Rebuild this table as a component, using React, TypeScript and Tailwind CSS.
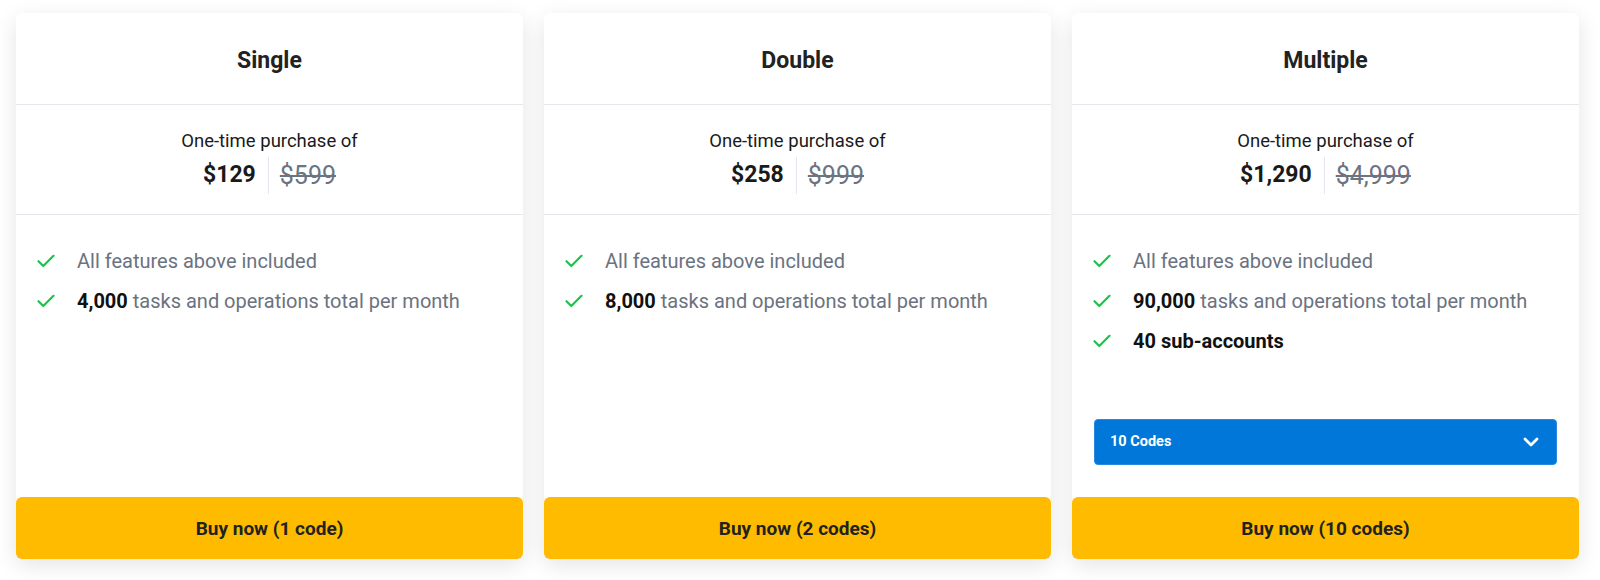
import { ChevronDown } from 'lucide-react'

type Feature = { bold?: string; text?: string; strong?: string }

type Plan = {
  name: string
  price: string
  oldPrice: string
  features: Feature[]
  cta: string
  select?: string
}

const plans: Plan[] = [
  {
    name: 'Single',
    price: '$129',
    oldPrice: '$599',
    features: [
      { text: 'All features above included' },
      { bold: '4,000', text: ' tasks and operations total per month' },
    ],
    cta: 'Buy now (1 code)',
  },
  {
    name: 'Double',
    price: '$258',
    oldPrice: '$999',
    features: [
      { text: 'All features above included' },
      { bold: '8,000', text: ' tasks and operations total per month' },
    ],
    cta: 'Buy now (2 codes)',
  },
  {
    name: 'Multiple',
    price: '$1,290',
    oldPrice: '$4,999',
    features: [
      { text: 'All features above included' },
      { bold: '90,000', text: ' tasks and operations total per month' },
      { strong: '40 sub-accounts' },
    ],
    cta: 'Buy now (10 codes)',
    select: '10 Codes',
  },
]

function Check() {
  return (
    <svg width="18" height="14" viewBox="0 0 18 14" fill="none" className="shrink-0">
      <path d="M1.5 7.2 L6.3 12 L16.5 1.8" stroke="#1cc24c" strokeWidth="2.2" strokeLinecap="round" strokeLinejoin="round" />
    </svg>
  )
}

function PlanCard({ plan }: { plan: Plan }) {
  return (
    <div className="flex flex-col rounded-md bg-white shadow-[0_6px_22px_rgba(0,0,0,0.11)]">
      {/* Title */}
      <div className="flex h-[92px] items-center justify-center border-b border-[#e4e7ec] pt-[6px]">
        <h3 className="text-[23px] font-bold text-[#222]">{plan.name}</h3>
      </div>

      {/* Price */}
      <div className="flex flex-col items-center border-b border-[#e4e7ec] pt-[24px] pb-[20px]">
        <p className="text-[18.5px] leading-6 text-[#1a1a1a]">One-time purchase of</p>
        <div className="mt-[4px] flex h-[37px] items-center">
          <span className="pr-3 text-[23px] font-bold text-[#1a1a1a]">{plan.price}</span>
          <span className="h-full border-l border-[#e4e7ec]" />
          <span className="pl-[11px] text-[25px] text-[#6b7480] line-through decoration-[1.5px]">{plan.oldPrice}</span>
        </div>
      </div>

      {/* Features */}
      <div className="flex flex-1 flex-col pt-[26px]">
        <ul>
          {plan.features.map((f, i) => (
            <li key={i} className="flex h-10 items-center gap-[22px] pl-[21px] text-[20px]">
              <Check />
              <span className="text-[#6b7280]">
                {f.bold && <b className="font-bold text-[#111]">{f.bold}</b>}
                {f.text}
                {f.strong && <b className="font-bold text-[#111]">{f.strong}</b>}
              </span>
            </li>
          ))}
        </ul>
        {plan.select && (
          <div className="mx-[22px] mt-[58px] mb-[32px] flex h-[46px] items-center justify-between rounded-[4px] border border-[#2a88de] bg-[#0077d9] pl-[15px] pr-[13px] text-white">
            <span className="text-[14.5px] font-bold">{plan.select}</span>
            <ChevronDown size={24} strokeWidth={2.75} />
          </div>
        )}
      </div>

      <button className="flex h-[62px] items-center justify-center rounded-md bg-[#ffbb00] pt-[3px] text-[19px] font-bold text-[#222]">
        {plan.cta}
      </button>
    </div>
  )
}

export default function App() {
  return (
    <div className="min-h-[580px] bg-white font-['Roboto',sans-serif]">
      <div className="grid grid-cols-3 gap-[21px] pt-[13px] pl-4 pr-[21px]">
        {plans.map((p) => (
          <PlanCard key={p.name} plan={p} />
        ))}
      </div>
    </div>
  )
}
